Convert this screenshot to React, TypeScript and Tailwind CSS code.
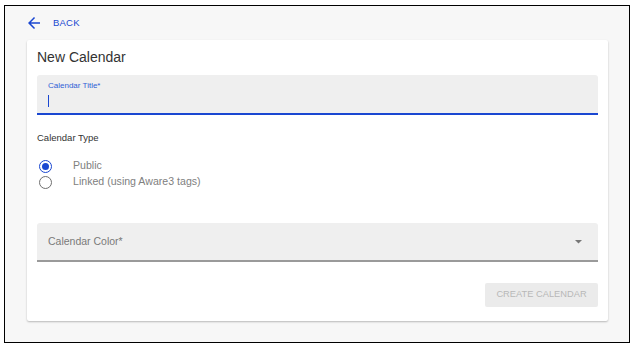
import React from "react";

export default function App() {
  return (
    <div className="w-[634px] h-[348px] bg-white pt-[5px] pl-[4px]" style={{ fontFamily: '"Liberation Sans", Arial, sans-serif' }}>
      <div className="w-[626px] h-[338px] border border-black bg-[#f7f7f7] flex flex-col">
        <div className="h-[34px] flex items-center pl-[20px] shrink-0">
          <svg width="18" height="18" viewBox="0 0 24 24" className="text-[#1a47d1]">
            <path d="M20 11H7.83l5.59-5.59L12 4l-8 8 8 8 1.41-1.41L7.83 13H20v-2z" fill="currentColor" />
          </svg>
          <span className="ml-[10px] text-[9.5px] text-[#1a47d1] tracking-[0.2px]">BACK</span>
        </div>
        <div className="mx-[21px] ml-[22px] bg-white rounded-[2px] shadow-[0_1px_2px_rgba(0,0,0,0.25)] px-[10px] pb-[14px]">
          <div className="h-[34px] flex items-center text-[14px] text-[#333]">New Calendar</div>
          <div className="mt-[1px] h-[40px] bg-[#efefef] border-b-2 border-[#1a47d1] rounded-t-[3px] px-[11px] pt-[6px]">
            <div className="text-[8px] leading-[9px] text-[#2f5fd6]">Calendar Title*</div>
            <div className="mt-[5px] w-[1px] h-[12px] bg-[#1a47d1]" />
          </div>
          <div className="mt-[17px] text-[9.5px] leading-[12px] text-[#333]">Calendar Type</div>
          <div className="mt-[16px] flex flex-col gap-[4px]">
            <div className="flex items-center h-[12px]">
              <div className="w-[13px] h-[13px] rounded-full border-[1.5px] border-[#1a47d1] flex items-center justify-center ml-[2px]">
                <div className="w-[7px] h-[7px] rounded-full bg-[#1a47d1]" />
              </div>
              <span className="ml-[21px] text-[10.6px] text-[#808080]">Public</span>
            </div>
            <div className="flex items-center h-[12px]">
              <div className="w-[13px] h-[13px] rounded-full border-[1.5px] border-[#6f6f6f] ml-[2px]" />
              <span className="ml-[21px] text-[10.6px] text-[#808080]">Linked (using Aware3 tags)</span>
            </div>
          </div>
          <div className="mt-[35px] h-[39px] bg-[#efefef] border-b-2 border-[#9a9a9a] rounded-t-[3px] pl-[11px] pr-[16px] flex items-center justify-between">
            <span className="text-[10.5px] text-[#7a7a7a]">Calendar Color*</span>
            <svg width="7" height="4" viewBox="0 0 7 4">
              <path d="M0 0h7L3.5 3.5z" fill="#777" />
            </svg>
          </div>
          <div className="mt-[21px] flex justify-end">
            <div className="w-[113px] h-[24px] bg-[#ebebeb] rounded-[2px] flex items-center justify-center text-[9.3px] text-[#b8b8b8]">CREATE CALENDAR</div>
          </div>
        </div>
      </div>
    </div>
  );
}
